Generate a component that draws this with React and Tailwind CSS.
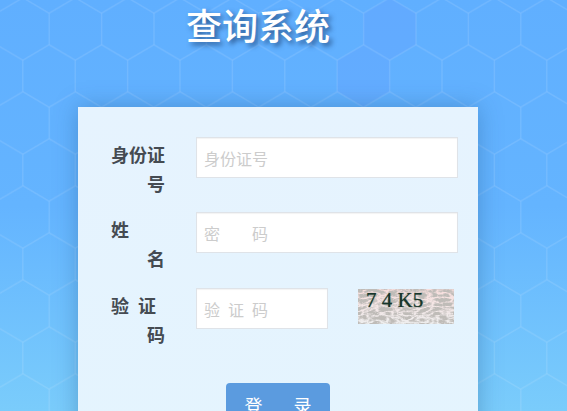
const font = { fontFamily: '"Noto Sans CJK SC", sans-serif' };

const HEX_W = 52.4;
const HEX_S = 31;
const ROW_H = 47;

function hexPoints(cx, cy) {
  const w = HEX_W / 2;
  const h = HEX_S / 2;
  return [
    [cx, cy - HEX_S],
    [cx + w, cy - h],
    [cx + w, cy + h],
    [cx, cy + HEX_S],
    [cx - w, cy + h],
    [cx - w, cy - h],
  ]
    .map((p) => p.join(","))
    .join(" ");
}

// background honeycomb, a few cells are tinted a bit darker
function HexBackground() {
  const cells = [];
  for (let row = 0; row < 10; row++) {
    for (let col = -1; col < 13; col++) {
      const cx = col * HEX_W + (row % 2 === 0 ? 49 : 23);
      const cy = row * ROW_H - 18;
      const dark = (row === 1 && col === 7) || (row === 2 && col === 6);
      cells.push(
        <polygon
          key={row + "-" + col}
          points={hexPoints(cx, cy)}
          fill={dark ? "#6a9cff" : "#ffffff"}
          fillOpacity={dark ? 0.22 : 0}
          stroke="#ffffff"
          strokeOpacity="0.06"
          strokeWidth="1.5"
        />
      );
    }
  }
  return (
    <svg className="absolute inset-0 w-full h-full" width="567" height="411">
      {cells}
    </svg>
  );
}

function Captcha() {
  return (
    <div className="relative w-[96px] h-[35px] mt-px ml-[30px] overflow-hidden">
      <svg width="96" height="35" className="block">
        <defs>
          <linearGradient id="tint" x1="0" y1="0" x2="0" y2="1">
            <stop offset="0" stopColor="#f8dedd" />
            <stop offset="1" stopColor="#eeeeee" />
          </linearGradient>
          <filter id="noise" x="0" y="0" width="100%" height="100%">
            <feTurbulence type="turbulence" baseFrequency="0.1 0.22" numOctaves="4" seed="11" />
            <feColorMatrix
              values="0 0 0 0 0.52
                      0 0 0 0 0.50
                      0 0 0 0 0.48
                      3 0 0 0 -0.42"
            />
            <feGaussianBlur stdDeviation="0.35" />
          </filter>
        </defs>
        <rect width="96" height="35" fill="url(#tint)" />
        <rect width="96" height="35" filter="url(#noise)" />
      </svg>
      <span
        className="absolute left-[8px] top-[-3px] text-[21px] leading-[28px] text-[#17352b] whitespace-pre [text-shadow:0_0_1px_rgba(20,60,40,0.7)]"
        style={{ fontFamily: '"Liberation Serif", serif' }}
      >
        7 4 K5
      </span>
    </div>
  );
}

function Label({ first, last }) {
  return (
    <div className="w-[54px] shrink-0 pt-[3px] text-[18px] leading-[29px] font-bold text-[#454b52] mr-[31px]">
      <div className="whitespace-nowrap">{first}</div>
      <div className="text-right">{last}</div>
    </div>
  );
}

const inputCls =
  "h-[41px] bg-white border border-[#dfe3e8] px-[7px] text-[16px] outline-none placeholder:text-[#cccccc] shadow-[inset_0_1px_1px_rgba(0,0,0,0.05)]";

export default function App() {
  return (
    <div
      className="relative h-screen overflow-hidden bg-gradient-to-b from-[#60afff] via-[#64b4ff] to-[#7accfb]"
      style={font}
    >
      <HexBackground />
      <div className="relative">
        <h1 className="pl-[186px] h-[107px] text-[36px] leading-[48px] font-medium text-white [text-shadow:3px_3px_5px_rgba(25,60,110,0.75)]">
          查询系统
        </h1>
        <div className="ml-[78px] w-[400px] h-[340px] pt-[30px] pl-[33px] bg-gradient-to-b from-[#e6f3fe] to-[#e4f4fe] shadow-[0_0_22px_rgba(30,80,130,0.35)]">
          <div className="flex h-[75px]">
            <Label first="身份证" last="号" />
            <input className={inputCls + " w-[262px]"} placeholder="身份证号" />
          </div>
          <div className="flex h-[76px]">
            <Label first="姓" last="名" />
            <input className={inputCls + " w-[262px]"} placeholder="密　　码" />
          </div>
          <div className="flex h-[95px]">
            <Label first={"验\u2002证"} last="码" />
            <input className={inputCls + " w-[132px]"} placeholder={"验\u2002证\u2002码"} />
            <Captcha />
          </div>
          <button className="ml-[115px] w-[104px] h-[44px] flex justify-center gap-[31px] pt-[8px] rounded-[4px] bg-[#5b9bdf] text-white text-[18px] leading-[28px]">
            <span>登</span>
            <span>录</span>
          </button>
        </div>
      </div>
    </div>
  );
}
